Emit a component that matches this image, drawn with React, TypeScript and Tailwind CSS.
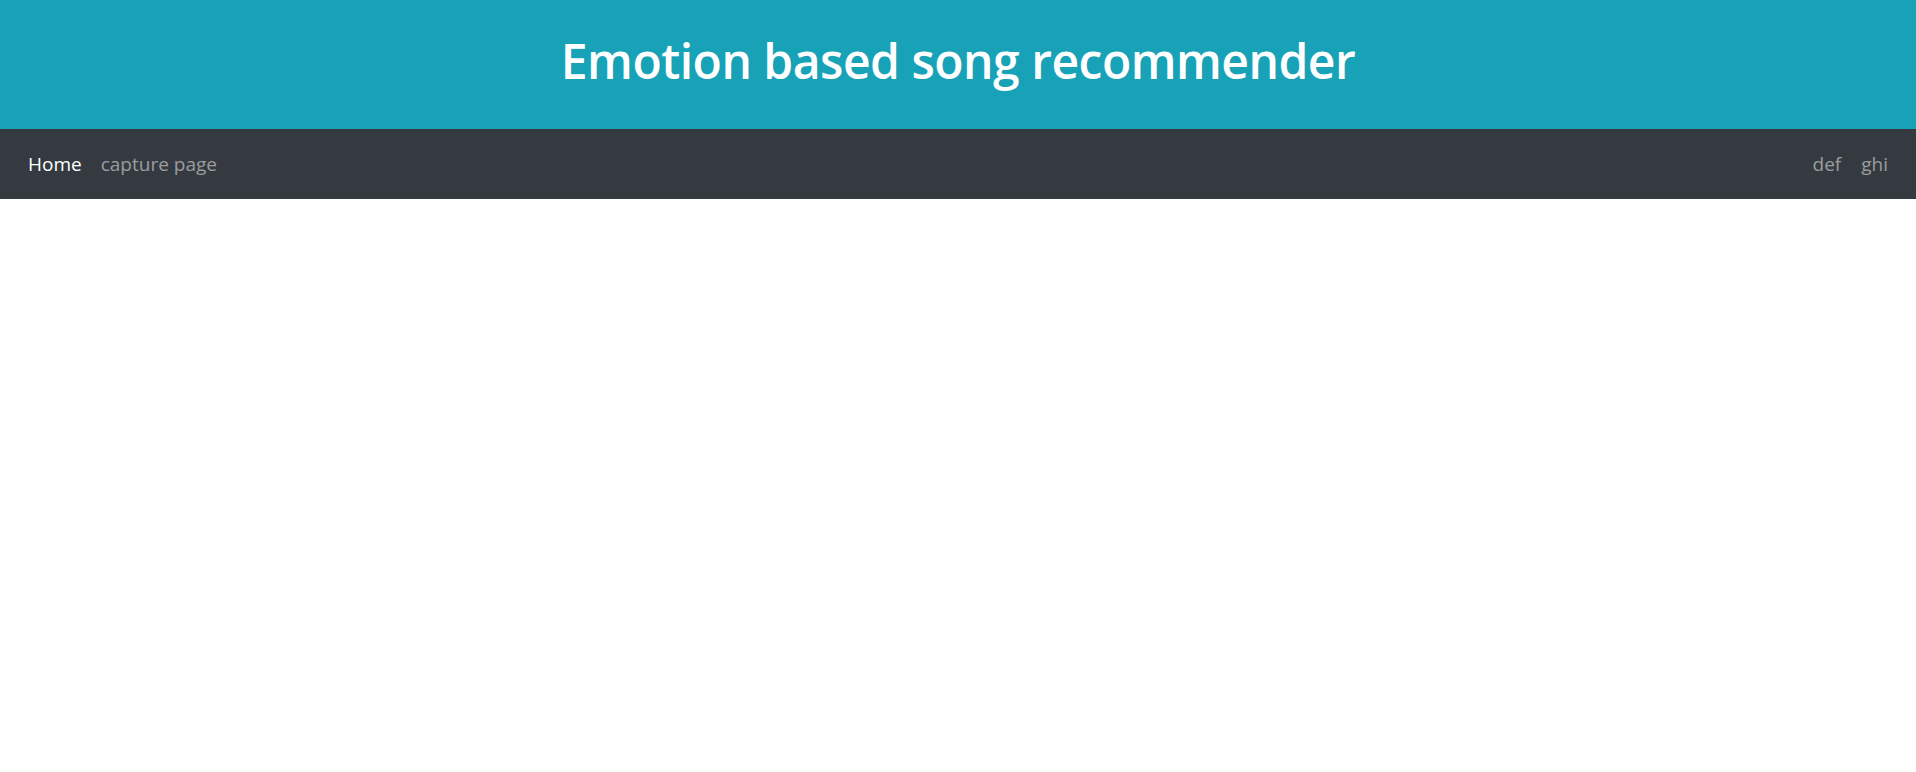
const links = ["def", "ghi"];

const App = () => {
  return (
    <div className="min-h-screen bg-white" style={{ fontFamily: '"Open Sans", "Noto Sans", sans-serif' }}>
      <header className="h-[129px] bg-[#17a2b8] flex items-center justify-center pb-[8px]">
        <h1 className="text-white text-[48px] font-semibold leading-none tracking-[-0.5px]">
          Emotion based song recommender
        </h1>
      </header>
      <nav className="h-[70px] bg-[#343a40] flex flex-row items-center justify-between px-[28px] text-[19px]">
        <div className="flex flex-row gap-[19px]">
          <a className="text-white">Home</a>
          <a className="text-white/50">capture page</a>
        </div>
        <div className="flex flex-row gap-[20px]">
          {links.map((l) => (
            <a key={l} className="text-white/50">
              {l}
            </a>
          ))}
        </div>
      </nav>
    </div>
  );
};

export default App;
